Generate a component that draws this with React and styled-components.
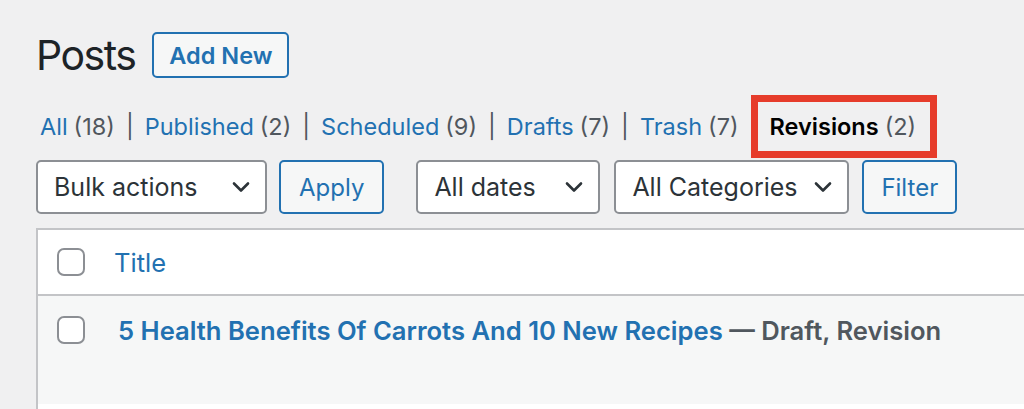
import styled, { createGlobalStyle } from 'styled-components';

const GlobalStyle = createGlobalStyle`
  body {
    margin: 0;
    background: #f0f0f1;
    font-family: Inter, "Liberation Sans", sans-serif;
    color: #3c434a;
    overflow: hidden;
  }
`;

const Wrap = styled.div`
  padding: 32px 0 0 36px;
  width: 1024px;
  box-sizing: border-box;
`;

const Header = styled.div`
  display: flex;
  align-items: center;
  height: 46px;
`;

const Heading = styled.h1`
  margin: 0 17px 0 0;
  font-size: 41px;
  font-weight: 400;
  color: #1d2327;
  letter-spacing: -1.5px;
`;

const Button = styled.button`
  height: ${(p) => p.$h || 54}px;
  padding: 0 ${(p) => p.$px || 16}px;
  border: 2px solid #2271b1;
  border-radius: 5px;
  background: #f6f7f7;
  color: #2271b1;
  font-family: inherit;
  font-size: ${(p) => p.$fs || 24}px;
  font-weight: ${(p) => p.$fw || 400};
  box-sizing: border-box;
  margin-right: ${(p) => p.$mr || 0}px;
`;

const Views = styled.div`
  display: flex;
  align-items: center;
  height: 63px;
  margin-top: 17px;
  font-size: 23.5px;
`;

const View = styled.span`
  display: inline-flex;
  align-items: center;
  padding-left: ${(p) => (p.$first ? 4 : 0)}px;
`;

const ViewLink = styled.a`
  color: #2271b1;
  text-decoration: none;
`;

const Count = styled.span`
  color: #50575e;
  margin-left: 6px;
`;

const Sep = styled.span`
  color: #50575e;
  margin: 0 11px;
`;

const Current = styled.span`
  display: inline-flex;
  align-items: center;
  height: 63px;
  box-sizing: border-box;
  border: 7px solid #e63c2b;
  padding: 0 14px 0 12px;
  margin-left: 12px;
`;

const CurrentLabel = styled.strong`
  color: #000;
  font-weight: 600;
`;

const Toolbar = styled.div`
  display: flex;
  align-items: center;
  margin-top: 2px;
  height: 54px;
`;

const Select = styled.div`
  display: flex;
  align-items: center;
  justify-content: space-between;
  width: ${(p) => p.$w}px;
  height: 54px;
  padding: 0 15px 0 16px;
  box-sizing: border-box;
  border: 2px solid #8c8f94;
  border-radius: 5px;
  background: #fff;
  color: #2c3338;
  font-size: 25px;
  margin-right: ${(p) => p.$mr || 0}px;
`;

const Chevron = () => (
  <svg width="18" height="12" viewBox="0 0 18 12" fill="none">
    <path d="M2 2.5 L9 9.5 L16 2.5" stroke="#2c3338" strokeWidth="2.6" strokeLinecap="round" strokeLinejoin="round" />
  </svg>
);

const Table = styled.div`
  margin-top: 14px;
  border-top: 2px solid #c3c4c7;
  border-left: 2px solid #c3c4c7;
  background: #fff;
  height: 200px;
`;

const HeadRow = styled.div`
  display: flex;
  align-items: center;
  height: 64px;
  padding-left: 19px;
  border-bottom: 2px solid #c3c4c7;
`;

const Row = styled.div`
  display: flex;
  align-items: flex-start;
  height: 108px;
  padding: 20px 0 0 19px;
  box-sizing: border-box;
  background: #f6f7f7;
`;

const Checkbox = styled.span`
  width: 28px;
  height: 28px;
  box-sizing: border-box;
  border: 2px solid #8c8f94;
  border-radius: 7px;
  background: #fff;
  flex-shrink: 0;
  margin-right: ${(p) => p.$mr}px;
`;

const ColTitle = styled.a`
  color: #2271b1;
  font-size: 25.5px;
  text-decoration: none;
`;

const RowTitle = styled.div`
  font-size: 25.6px;
  font-weight: 600;
  line-height: 30px;
  color: #50575e;
  white-space: nowrap;
`;

const RowLink = styled.a`
  color: #2271b1;
  text-decoration: none;
`;

const views = [
  { label: 'All', count: 18 },
  { label: 'Published', count: 2 },
  { label: 'Scheduled', count: 9 },
  { label: 'Drafts', count: 7 },
  { label: 'Trash', count: 7 },
];

export default function App() {
  return (
    <>
      <GlobalStyle />
      <Wrap>
        <Header>
          <Heading>Posts</Heading>
          <Button $h={46} $px={15} $fs={23.5} $fw={600}>Add New</Button>
        </Header>
        <Views>
          {views.map((v, i) => (
            <View key={v.label} $first={i === 0}>
              <ViewLink href="#">{v.label}</ViewLink>
              <Count>({v.count})</Count>
              {i < views.length - 1 && <Sep>|</Sep>}
            </View>
          ))}
          <Current>
            <CurrentLabel>Revisions</CurrentLabel>
            <Count>(2)</Count>
          </Current>
        </Views>
        <Toolbar>
          <Select $w={231} $mr={12}>Bulk actions<Chevron /></Select>
          <Button $px={18} $mr={32}>Apply</Button>
          <Select $w={184} $mr={14}>All dates<Chevron /></Select>
          <Select $w={235} $mr={13}>All Categories<Chevron /></Select>
          <Button $px={17}>Filter</Button>
        </Toolbar>
        <Table>
          <HeadRow>
            <Checkbox $mr={29} />
            <ColTitle href="#">Title</ColTitle>
          </HeadRow>
          <Row>
            <Checkbox $mr={33} />
            <RowTitle>
              <RowLink href="#">5 Health Benefits Of Carrots And 10 New Recipes</RowLink> — Draft, Revision
            </RowTitle>
          </Row>
        </Table>
      </Wrap>
    </>
  );
}
